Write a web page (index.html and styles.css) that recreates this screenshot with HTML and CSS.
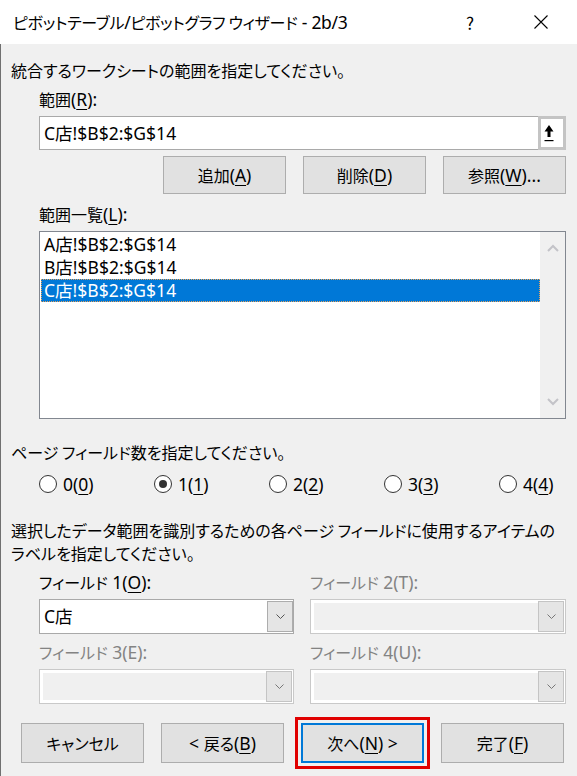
FILE: index.html
```html
<!DOCTYPE html>
<html lang="ja">
<head>
    <meta charset="UTF-8">
    <meta name="viewport" content="width=device-width, initial-scale=1.0">
    <title>ピボットテーブル/ピボットグラフ ウィザード</title>
    <link rel="stylesheet" href="styles.css">
</head>
<body>
<div class="wizard">

    <!-- Title bar -->
    <div class="title-bar">
        <span class="title-text">ピボットテーブル<span class="en">/</span>ピボットグラフ ウィザード<span class="en"> - 2b/3</span></span>
        <span class="title-help">?</span>
        <span class="title-close">
            <svg width="16" height="16" viewBox="0 0 16 16"><path d="M1.5 1.5 L14.5 14.5 M14.5 1.5 L1.5 14.5" stroke="#000" stroke-width="1.1" fill="none"/></svg>
        </span>
    </div>

    <div class="wizard-body">
        <p class="prompt">統合するワークシートの範囲を指定してください。</p>

        <!-- Range entry + list -->
        <div class="range-group">
            <div class="field-label">範囲<span class="en">(<u>R</u>):</span></div>
            <div class="range-input">
                <span class="range-value en">C店!$B$2:$G$14</span>
                <span class="collapse-btn">
                    <svg width="10" height="18" viewBox="0 0 10 18">
                        <path d="M5 1 L9.5 7.5 L6.5 7.5 L6.5 13 L3.5 13 L3.5 7.5 L0.5 7.5 Z" fill="#000"/>
                        <rect x="0.5" y="16" width="9" height="1.2" fill="#000"/>
                    </svg>
                </span>
            </div>
            <div class="range-actions">
                <button class="btn">追加<span class="en">(<u>A</u>)</span></button>
                <button class="btn">削除<span class="en">(<u>D</u>)</span></button>
                <button class="btn">参照<span class="en">(<u>W</u>)...</span></button>
            </div>

            <div class="field-label list-label">範囲一覧<span class="en">(<u>L</u>):</span></div>
            <div class="range-list">
                <ul>
                    <li class="en">A店!$B$2:$G$14</li>
                    <li class="en">B店!$B$2:$G$14</li>
                    <li class="en selected">C店!$B$2:$G$14</li>
                </ul>
                <div class="scrollbar">
                    <span class="scroll-arrow">
                        <svg width="12" height="8" viewBox="0 0 12 8"><path d="M1 7 L6 2 L11 7" stroke="#c3c3c8" stroke-width="2" fill="none"/></svg>
                    </span>
                    <span class="scroll-arrow">
                        <svg width="12" height="8" viewBox="0 0 12 8"><path d="M1 1 L6 6 L11 1" stroke="#c3c3c8" stroke-width="2" fill="none"/></svg>
                    </span>
                </div>
            </div>
        </div>

        <!-- Page field count -->
        <p class="prompt page-prompt">ページ フィールド数を指定してください。</p>
        <div class="radio-row">
            <label class="radio"><span class="radio-dot"></span><span class="en">0(<u>0</u>)</span></label>
            <label class="radio checked"><span class="radio-dot"></span><span class="en">1(<u>1</u>)</span></label>
            <label class="radio"><span class="radio-dot"></span><span class="en">2(<u>2</u>)</span></label>
            <label class="radio"><span class="radio-dot"></span><span class="en">3(<u>3</u>)</span></label>
            <label class="radio"><span class="radio-dot"></span><span class="en">4(<u>4</u>)</span></label>
        </div>

        <!-- Item labels for each page field -->
        <p class="prompt label-prompt">選択したデータ範囲を識別するための各ページ フィールドに使用するアイテムの<br>ラベルを指定してください。</p>
        <div class="field-grid">
            <div class="field">
                <div class="field-label">フィールド<span class="en"> 1(<u>O</u>):</span></div>
                <div class="combo">
                    <span class="combo-value en">C店</span>
                    <span class="combo-btn"><svg width="9" height="5" viewBox="0 0 9 5"><path d="M0.5 0.5 L4.5 4.5 L8.5 0.5" stroke="#555" stroke-width="1" fill="none"/></svg></span>
                </div>
            </div>
            <div class="field disabled">
                <div class="field-label">フィールド<span class="en"> 2(T):</span></div>
                <div class="combo">
                    <span class="combo-value"></span>
                    <span class="combo-btn"><svg width="9" height="5" viewBox="0 0 9 5"><path d="M0.5 0.5 L4.5 4.5 L8.5 0.5" stroke="#777" stroke-width="1" fill="none"/></svg></span>
                </div>
            </div>
            <div class="field disabled">
                <div class="field-label">フィールド<span class="en"> 3(E):</span></div>
                <div class="combo">
                    <span class="combo-value"></span>
                    <span class="combo-btn"><svg width="9" height="5" viewBox="0 0 9 5"><path d="M0.5 0.5 L4.5 4.5 L8.5 0.5" stroke="#777" stroke-width="1" fill="none"/></svg></span>
                </div>
            </div>
            <div class="field disabled">
                <div class="field-label">フィールド<span class="en"> 4(U):</span></div>
                <div class="combo">
                    <span class="combo-value"></span>
                    <span class="combo-btn"><svg width="9" height="5" viewBox="0 0 9 5"><path d="M0.5 0.5 L4.5 4.5 L8.5 0.5" stroke="#777" stroke-width="1" fill="none"/></svg></span>
                </div>
            </div>
        </div>

        <!-- Wizard navigation -->
        <div class="footer">
            <button class="btn">キャンセル</button>
            <button class="btn"><span class="en">&lt; </span>戻る<span class="en">(<u>B</u>)</span></button>
            <button class="btn btn-default">次へ<span class="en">(<u>N</u>) &gt;</span></button>
            <button class="btn">完了<span class="en">(<u>F</u>)</span></button>
        </div>
    </div>
</div>
</body>
</html>
```

FILE: styles.css
```css
/* General */
body {
    margin: 0;
    background: #f0f0f0;
    color: #000;
    font-family: "Noto Sans CJK JP", "Noto Sans", sans-serif;
    font-size: 16px;
    font-feature-settings: "palt";
}

/* Latin runs are set a little larger, like the UI font's wide Latin */
.en {
    font-family: "Noto Sans", "Noto Sans CJK JP", sans-serif;
    font-size: 17.5px;
}

u {
    text-decoration-thickness: 1px;
    text-underline-offset: 3px;
}

.wizard {
    width: 577px;
    height: 776px;
    display: flex;
    flex-direction: column;
    overflow: hidden;
}

/* Title bar */
.title-bar {
    height: 44px;
    flex: none;
    background: #fff;
    display: flex;
    align-items: center;
    padding: 0 21px 0 13px;
}

.title-text {
    flex: 1;
    white-space: nowrap;
    letter-spacing: -0.3px;
}

.title-help {
    width: 30px;
    text-align: center;
    font-size: 17px;
    margin-right: 41px;
}

.title-close {
    width: 30px;
    display: flex;
    justify-content: center;
}

/* Dialog body */
.wizard-body {
    flex: 1;
    padding: 16px 11px 0 10px;
    border-left: 1px solid #707070;
}

.prompt {
    margin: 0;
    line-height: 21px;
    white-space: nowrap;
}

.field-label {
    line-height: 21px;
    white-space: nowrap;
}

.range-group {
    margin-top: 8px;
    padding-left: 28px;
}

/* Range text box */
.range-input {
    margin-top: 6px;
    height: 34px;
    box-sizing: border-box;
    border: 1px solid #a9a9a9;
    background: #fff;
    display: flex;
}

.range-value {
    flex: 1;
    line-height: 32px;
    padding-left: 4px;
}

.collapse-btn {
    width: 28px;
    box-sizing: border-box;
    margin: -1px -1px -1px 0;
    border: 3px solid #c4c4c4;
    background: #fff;
    display: flex;
    align-items: center;
    padding-left: 3px;
}

.range-actions {
    margin-top: 6px;
    display: flex;
    justify-content: flex-end;
    gap: 17px;
}

/* Buttons */
.btn {
    width: 123px;
    height: 38px;
    box-sizing: border-box;
    background: #e1e1e1;
    border: 1px solid #adadad;
    font-family: inherit;
    font-size: 16px;
    font-feature-settings: "palt";
    color: #000;
    padding: 0;
}

/* Range list */
.list-label {
    margin-top: 10px;
}

.range-list {
    margin-top: 6px;
    height: 188px;
    box-sizing: border-box;
    border: 1px solid #828790;
    background: #fff;
    display: flex;
}

.range-list ul {
    flex: 1;
    list-style: none;
    margin: 0;
    padding: 1px 0 0 1px;
}

.range-list li {
    height: 23px;
    line-height: 23px;
    padding-left: 3px;
}

.range-list li.selected {
    background: #0078d7;
    color: #fff;
    outline: 1px dotted #e8a25a;
    outline-offset: -1px;
}

.scrollbar {
    width: 25px;
    background: #f0f0f0;
    display: flex;
    flex-direction: column;
    justify-content: space-between;
}

.scroll-arrow {
    height: 32px;
    display: flex;
    align-items: center;
    justify-content: center;
}

/* Page field count */
.page-prompt {
    margin-top: 23px;
}

.radio-row {
    margin-top: 10px;
    padding-left: 28px;
    display: flex;
    height: 22px;
}

.radio {
    flex: none;
    width: 115px;
    display: flex;
    align-items: center;
    gap: 6px;
    white-space: nowrap;
}

.radio:last-child {
    width: auto;
}

.radio-dot {
    width: 18px;
    height: 18px;
    box-sizing: border-box;
    border: 1px solid #333;
    border-radius: 50%;
    background: #fff;
    display: flex;
    align-items: center;
    justify-content: center;
}

.radio.checked .radio-dot::after {
    content: "";
    width: 8px;
    height: 8px;
    border-radius: 50%;
    background: #333;
}

/* Page field labels */
.label-prompt {
    margin-top: 24px;
    line-height: 23px;
}

.field-grid {
    margin-top: 7px;
    padding-left: 28px;
    display: grid;
    grid-template-columns: 255px 256px;
    column-gap: 16px;
    row-gap: 8px;
}

.combo {
    margin-top: 6px;
    height: 35px;
    box-sizing: border-box;
    border: 1px solid #a9a9a9;
    background: #fff;
    display: flex;
}

.combo-value {
    flex: 1;
    line-height: 33px;
    padding-left: 4px;
}

.combo-btn {
    width: 26px;
    box-sizing: border-box;
    margin: 1px 0 1px 0;
    background: #e5e5e5;
    border: 1px solid #adadad;
    display: flex;
    align-items: center;
    justify-content: center;
}

.field.disabled .field-label {
    color: #838383;
}

.field.disabled .combo {
    border-color: #c9c9c9;
    padding: 3px 0 3px 3px;
}

.field.disabled .combo-value {
    background: #f0f0f0;
}

.field.disabled .combo-btn {
    margin: -2px 1px -2px 0;
    border-color: #c4c4c4;
}

/* Footer */
.footer {
    margin-top: 19px;
    padding-left: 10px;
    display: flex;
    gap: 17px;
}

.footer .btn {
    height: 40px;
}

.btn-default {
    border: 2px solid #0078d7;
    outline: 3px solid #e00000;
    outline-offset: 3px;
}
```
